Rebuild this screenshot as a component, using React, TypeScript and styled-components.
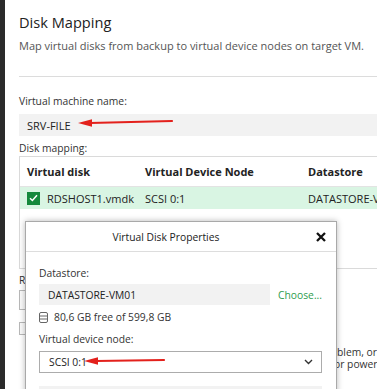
import React from 'react'
import styled, { createGlobalStyle } from 'styled-components'

const GlobalStyle = createGlobalStyle`
  html, body {
    margin: 0;
    padding: 0;
    background: #ffffff;
  }
  body {
    font-family: 'Open Sans', 'Noto Sans', sans-serif;
    color: #333333;
  }
`

const Screen = styled.div`
  position: relative;
  display: flex;
  width: 377px;
  height: 389px;
  overflow: hidden;
  background: #ffffff;
`

const SideBar = styled.div`
  flex: 0 0 5px;
  background: #2b2b2b;
`

const Main = styled.div`
  flex: 1;
  min-width: 0;
  display: flex;
  flex-direction: column;
  padding: 11px 0 0 14px;
`

const Title = styled.h1`
  margin: 0;
  font-size: 14.6px;
  line-height: 23px;
  font-weight: 400;
  color: #222222;
  white-space: nowrap;
`

const Subtitle = styled.p`
  margin: 4px 0 0;
  font-size: 11px;
  line-height: 16px;
  color: #555555;
  white-space: nowrap;
`

const Separator = styled.hr`
  margin: 22px 0 0;
  border: 0;
  border-top: 1px solid #dcdcdc;
  width: 100%;
`

const Label = styled.div<{ $top: number }>`
  margin-top: ${(p) => p.$top}px;
  font-size: 10.3px;
  line-height: 16px;
  color: #333333;
  white-space: nowrap;
`

const ReadOnlyField = styled.div`
  position: relative;
  margin-top: 5px;
  height: 22px;
  display: flex;
  align-items: center;
  padding-left: 8px;
  background: #f2f2f2;
  font-size: 11px;
  color: #222222;
`

const Table = styled.div`
  margin-top: 0;
  height: 113px;
  border: 1px solid #dadada;
  border-right: 0;
  box-sizing: border-box;
`

const Row = styled.div<{ $header?: boolean; $selected?: boolean }>`
  display: grid;
  grid-template-columns: 118px 163px 1fr;
  align-items: center;
  height: ${(p) => (p.$header ? 29 : 22)}px;
  background: ${(p) => (p.$selected ? '#d9f5e3' : '#ffffff')};
  border-bottom: ${(p) => (p.$header ? '1px solid #e3e3e3' : '0')};
  font-size: 11px;
  font-weight: ${(p) => (p.$header ? 700 : 400)};
  color: #222222;
`

const Cell = styled.div`
  display: flex;
  align-items: center;
  gap: 7px;
  padding-left: 7px;
  white-space: nowrap;
  overflow: hidden;
`

const CheckBox = styled.span`
  flex: 0 0 13px;
  height: 13px;
  display: flex;
  align-items: center;
  justify-content: center;
  background: #14893c;
`

const EmptyBox = styled.div<{ $height: number; $width: number; $top?: number }>`
  margin-top: ${(p) => p.$top ?? 0}px;
  width: ${(p) => p.$width}px;
  height: ${(p) => p.$height}px;
  border: 1px solid #b8b8b8;
  box-sizing: border-box;
  background: #fafafa;
`

const OptionRow = styled.div`
  margin-top: 12px;
  display: flex;
  gap: 8px;
`

const Description = styled.div`
  margin-top: 11px;
  font-size: 10.3px;
  line-height: 12px;
  color: #333333;
  white-space: nowrap;
`

const Hidden = styled.span<{ $width: number }>`
  display: inline-block;
  width: ${(p) => p.$width}px;
  overflow: hidden;
  vertical-align: bottom;
  text-align: right;
  direction: rtl;
`

const Dialog = styled.div`
  position: absolute;
  left: 25px;
  top: 221px;
  width: 312px;
  height: 200px;
  box-sizing: border-box;
  background: #ffffff;
  border: 1px solid #a9a9a9;
  box-shadow: 0 0 6px rgba(0, 0, 0, 0.28);
  display: flex;
  flex-direction: column;
`

const DialogHeader = styled.div`
  height: 29px;
  display: flex;
  align-items: center;
  border-bottom: 1px solid #dddddd;
`

const DialogTitle = styled.div`
  flex: 1;
  text-align: center;
  font-size: 10.3px;
  color: #222222;
`

const CloseButton = styled.div`
  flex: 0 0 30px;
  display: flex;
  align-items: center;
  justify-content: center;
`

const DialogBody = styled.div`
  padding: 13px 14px 0 13px;
  display: flex;
  flex-direction: column;
`

const DialogLabel = styled.div<{ $top?: number }>`
  margin-top: ${(p) => p.$top ?? 0}px;
  font-size: 10.3px;
  line-height: 16px;
  color: #333333;
`

const FieldRow = styled.div`
  margin-top: 3px;
  display: flex;
  align-items: center;
  gap: 8px;
`

const GreyField = styled.div`
  flex: 0 0 231px;
  height: 21px;
  display: flex;
  align-items: center;
  padding-left: 9px;
  box-sizing: border-box;
  background: #f2f2f2;
  font-size: 10.3px;
  color: #222222;
`

const LinkText = styled.span`
  font-size: 10.3px;
  color: #2e9d4f;
`

const FreeSpace = styled.div`
  margin-top: 5px;
  display: flex;
  align-items: center;
  gap: 6px;
  font-size: 10.3px;
  line-height: 14px;
  color: #333333;
`

const Select = styled.div`
  position: relative;
  margin-top: 4px;
  height: 22px;
  display: flex;
  align-items: center;
  justify-content: space-between;
  padding: 0 8px 0 9px;
  box-sizing: border-box;
  border: 1px solid #acacac;
  font-size: 10.3px;
  color: #222222;
`

const GreyStrip = styled.div`
  margin-top: 13px;
  height: 20px;
  background: #f2f2f2;
`

const Arrow = styled.svg<{ $left: number; $top: number }>`
  position: absolute;
  left: ${(p) => p.$left}px;
  top: ${(p) => p.$top}px;
  overflow: visible;
`

function RedArrow({ left, top, length, rise }: { left: number; top: number; length: number; rise: number }) {
  return (
    <Arrow $left={left} $top={top} width={length} height={10}>
      <line x1={12} y1={5} x2={length} y2={5 - rise} stroke="#e3211c" strokeWidth={2.2} strokeLinecap="round" />
      <polygon points={`0,5 14,1.2 14,8.8`} fill="#e3211c" />
    </Arrow>
  )
}

export default function App() {
  return (
    <>
      <GlobalStyle />
      <Screen>
        <SideBar />
        <Main>
          <Title>Disk Mapping</Title>
          <Subtitle>Map virtual disks from backup to virtual device nodes on target VM.</Subtitle>
          <Separator />

          <Label $top={16}>Virtual machine name:</Label>
          <ReadOnlyField>
            SRV-FILE
            <RedArrow left={59} top={4} length={94} rise={2} />
          </ReadOnlyField>

          <Label $top={4}>Disk mapping:</Label>
          <Table>
            <Row $header>
              <Cell>Virtual disk</Cell>
              <Cell>Virtual Device Node</Cell>
              <Cell>Datastore</Cell>
            </Row>
            <Row $selected>
              <Cell>
                <CheckBox>
                  <svg width="9" height="8" viewBox="0 0 9 8">
                    <path d="M1 4.2 L3.4 6.5 L8 1.3" fill="none" stroke="#ffffff" strokeWidth="1.5" />
                  </svg>
                </CheckBox>
                RDSHOST1.vmdk
              </Cell>
              <Cell>SCSI 0:1</Cell>
              <Cell>DATASTORE-VM01</Cell>
            </Row>
          </Table>

          <Label $top={3}>Restore to datastore:</Label>
          <EmptyBox $width={200} $height={20} $top={2} />
          <OptionRow>
            <EmptyBox $width={13} $height={13} />
          </OptionRow>
          <Description>
            <Hidden $width={318}>Select this option if you restore the VM after a software pro</Hidden>
            blem, or user error
            <br />
            <Hidden $width={315}>Do not select this option after a disk failure </Hidden>
            or power loss.
          </Description>
        </Main>

        <Dialog>
          <DialogHeader>
            <DialogTitle>Virtual Disk Properties</DialogTitle>
            <CloseButton>
              <svg width="10" height="10" viewBox="0 0 10 10">
                <path d="M1 1 L9 9 M9 1 L1 9" stroke="#111111" strokeWidth="2.3" />
              </svg>
            </CloseButton>
          </DialogHeader>
          <DialogBody>
            <DialogLabel>Datastore:</DialogLabel>
            <FieldRow>
              <GreyField>DATASTORE-VM01</GreyField>
              <LinkText>Choose...</LinkText>
            </FieldRow>
            <FreeSpace>
              <svg width="9" height="11" viewBox="0 0 9 11">
                <rect x="0.5" y="0.5" width="8" height="10" rx="1.5" fill="none" stroke="#666666" />
                <path d="M0.5 4 H8.5 M0.5 7 H8.5" stroke="#666666" />
              </svg>
              80,6 GB free of 599,8 GB
            </FreeSpace>
            <DialogLabel $top={7}>Virtual device node:</DialogLabel>
            <Select>
              SCSI 0:1
              <svg width="9" height="6" viewBox="0 0 9 6">
                <path d="M1 1 L4.5 4.5 L8 1" fill="none" stroke="#333333" strokeWidth="1.4" />
              </svg>
              <RedArrow left={44} top={4} length={80} rise={1} />
            </Select>
            <GreyStrip />
          </DialogBody>
        </Dialog>
      </Screen>
    </>
  )
}
